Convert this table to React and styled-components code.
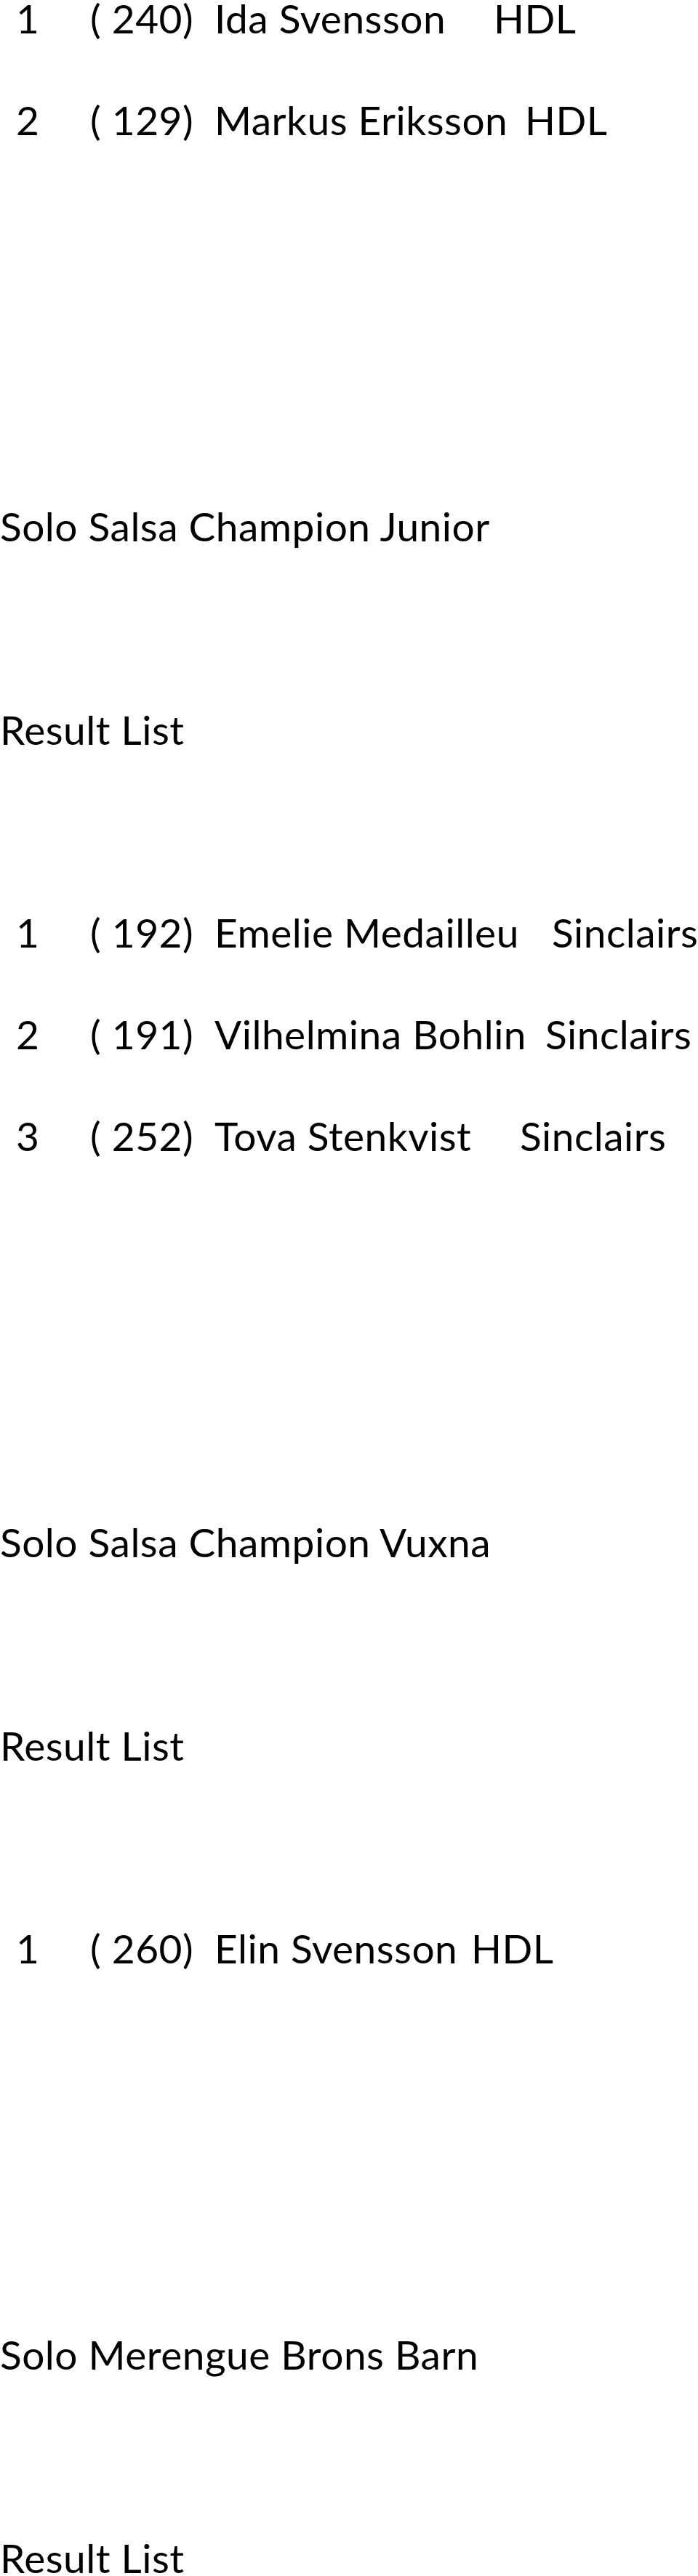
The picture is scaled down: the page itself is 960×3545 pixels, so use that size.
import styled, { createGlobalStyle } from 'styled-components';

// one line of the source document is ~139.8px tall; text boxes are kept tight
const LINE = 139.8;
const TEXT_H = 50;
const NO_X = 124;
const NAME_X = 295;

const GlobalStyle = createGlobalStyle`
  body {
    margin: 0;
    background: #ffffff;
    color: #000000;
    font-family: Lato, 'Liberation Sans', sans-serif;
  }
`;

const Page = styled.div`
  display: flex;
  flex-direction: column;
  font-size: 55px;
  letter-spacing: 0.5px;
  line-height: ${TEXT_H}px;
  white-space: nowrap;
`;

const Category = styled.section`
  display: flex;
  flex-direction: column;
  margin-top: ${(props) => (props.$first ? 0 : LINE * 4 - TEXT_H)}px;
`;

const Heading = styled.div`
  height: ${TEXT_H}px;
`;

const Label = styled.div`
  height: ${TEXT_H}px;
  margin-top: ${LINE * 2 - TEXT_H}px;
`;

const Rows = styled.div`
  display: flex;
  flex-direction: column;
  gap: ${LINE - TEXT_H}px;
  margin-top: ${(props) => (props.$spaced ? LINE * 2 - TEXT_H : 0)}px;
`;

const Row = styled.div`
  display: flex;
  height: ${TEXT_H}px;
`;

const Place = styled.span`
  box-sizing: border-box;
  width: ${NO_X}px;
  padding-left: 22px;
  flex-shrink: 0;
`;

const StartNo = styled.span`
  width: ${NAME_X - NO_X}px;
  flex-shrink: 0;
`;

const Name = styled.span`
  width: ${(props) => props.$width}px;
  flex-shrink: 0;
`;

const Club = styled.span``;

const categories = [
  {
    title: null,
    rows: [
      { place: 1, no: 240, name: 'Ida Svensson', club: 'HDL', clubX: 679 },
      { place: 2, no: 129, name: 'Markus Eriksson', club: 'HDL', clubX: 722 },
    ],
  },
  {
    title: 'Solo Salsa Champion Junior',
    rows: [
      { place: 1, no: 192, name: 'Emelie Medailleu', club: 'Sinclairs', clubX: 759 },
      { place: 2, no: 191, name: 'Vilhelmina Bohlin', club: 'Sinclairs', clubX: 750 },
      { place: 3, no: 252, name: 'Tova Stenkvist', club: 'Sinclairs', clubX: 715 },
    ],
  },
  {
    title: 'Solo Salsa Champion Vuxna',
    rows: [{ place: 1, no: 260, name: 'Elin Svensson', club: 'HDL', clubX: 648 }],
  },
  {
    title: 'Solo Merengue Brons Barn',
    rows: [],
  },
];

const App = () => (
  <>
    <GlobalStyle />
    <Page>
      {categories.map((cat, i) => (
        <Category key={i} $first={i === 0}>
          {cat.title && (
            <>
              <Heading>{cat.title}</Heading>
              <Label>Result List</Label>
            </>
          )}
          {cat.rows.length > 0 && (
            <Rows $spaced={!!cat.title}>
              {cat.rows.map((row) => (
                <Row key={row.no}>
                  <Place>{row.place}</Place>
                  <StartNo>( {row.no})</StartNo>
                  <Name $width={row.clubX - NAME_X}>{row.name}</Name>
                  <Club>{row.club}</Club>
                </Row>
              ))}
            </Rows>
          )}
        </Category>
      ))}
    </Page>
  </>
);

export default App;
